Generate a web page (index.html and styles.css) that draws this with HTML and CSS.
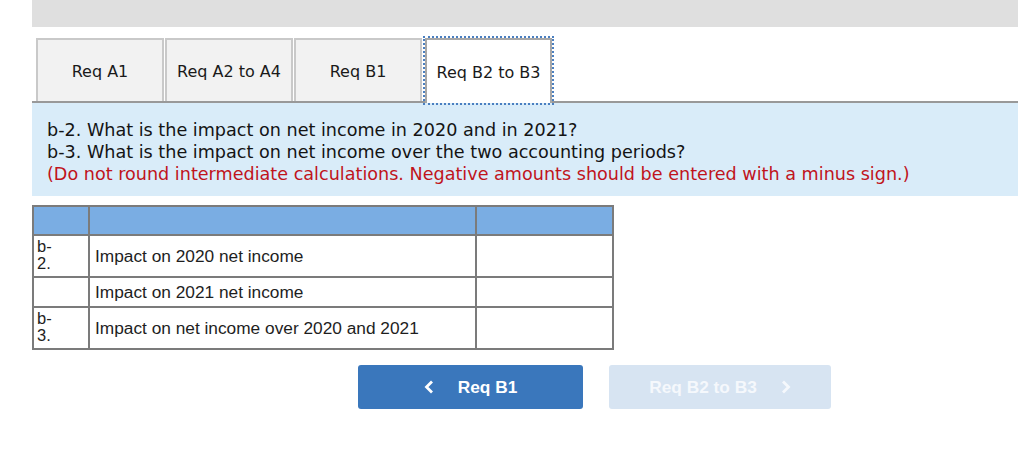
FILE: index.html
```html
<!DOCTYPE html>
<html>
<head>
<meta charset="utf-8">
<link rel="stylesheet" href="styles.css">
</head>
<body>
<div class="page">
  <div class="topbar"></div>
  <div class="tabs">
    <div class="tab">Req A1</div>
    <div class="tab">Req A2 to A4</div>
    <div class="tab">Req B1</div>
    <div class="tab active">Req B2 to B3</div>
  </div>
  <div class="panel">
    <p>b-2. What is the impact on net income in 2020 and in 2021?</p>
    <p>b-3. What is the impact on net income over the two accounting periods?</p>
    <p class="note">(Do not round intermediate calculations. Negative amounts should be entered with a minus sign.)</p>
  </div>
  <table class="grid">
    <tr class="head"><td class="c1"></td><td class="c2"></td><td class="c3"></td></tr>
    <tr class="r1"><td class="c1 lab">b-<br>2.</td><td class="c2">Impact on 2020 net income</td><td class="c3"></td></tr>
    <tr class="r2"><td class="c1"></td><td class="c2">Impact on 2021 net income</td><td class="c3"></td></tr>
    <tr class="r3"><td class="c1 lab">b-<br>3.</td><td class="c2">Impact on net income over 2020 and 2021</td><td class="c3"></td></tr>
  </table>
  <div class="nav">
    <button class="btn prev"><svg class="chev" width="10" height="14" viewBox="0 0 10 14"><polyline points="8,1.5 2.5,7 8,12.5"/></svg><span>Req B1</span></button>
    <button class="btn next"><span>Req B2 to B3</span><svg class="chev" width="10" height="14" viewBox="0 0 10 14"><polyline points="2,1.5 7.5,7 2,12.5"/></svg></button>
  </div>
</div>
</body>
</html>
```

FILE: styles.css
```css
html, body {
  margin: 0;
  padding: 0;
  background: #ffffff;
}

.page {
  margin-left: 32px;
}

.topbar {
  height: 27px;
  background: #dfdfdf;
}

.tabs {
  margin-top: 11px;
  display: flex;
  gap: 1px;
  padding-left: 4px;
  border-bottom: 2px solid #999999;
  height: 63px;
}

.tab {
  box-sizing: border-box;
  width: 128px;
  height: 63px;
  border: 2px solid #c9c9c9;
  border-bottom: none;
  background: #f2f2f2;
  display: flex;
  align-items: center;
  justify-content: center;
  font-family: "DejaVu Sans", Verdana, sans-serif;
  font-size: 16px;
  color: #1a1a1a;
  padding-top: 1px;
}

.tab.active {
  margin-left: 2px;
  width: 127px;
  height: 65px;
  background: #ffffff;
  border-color: #a8a8a8;
  outline: 2px dotted #4a7fc0;
}

.panel {
  background: #d9ecf9;
  padding: 16px 15px 11px;
  font-family: "DejaVu Sans", Verdana, sans-serif;
  font-size: 17.6px;
  line-height: 22px;
  color: #141414;
}

.panel p {
  margin: 0;
  white-space: nowrap;
}

.panel .note {
  color: #c0141c;
}

.grid {
  margin-top: 9px;
  border-collapse: collapse;
  font-family: "Liberation Sans", Arial, sans-serif;
  font-size: 17.3px;
  color: #1e1e1e;
}

.grid td {
  border: 2px solid #7b7b7b;
  padding: 0 5px;
  vertical-align: middle;
}

.grid .c1 {
  width: 48px;
  padding: 0 3px;
}

.grid .c2 {
  width: 375px;
}

.grid .c3 {
  width: 125px;
}

.grid .head td {
  background: #7aade3;
  height: 27px;
}

.grid .r1 td {
  height: 38px;
}

.grid .r2 td {
  height: 28px;
}

.grid .r3 td {
  height: 38px;
}

.grid .lab {
  font-size: 16.5px;
  line-height: 17px;
  vertical-align: top;
  padding-top: 2px;
}

.nav {
  margin-top: 15px;
  margin-left: 326px;
  display: flex;
  gap: 26px;
}

.btn {
  box-sizing: border-box;
  height: 44px;
  border: none;
  border-radius: 3px;
  display: flex;
  align-items: center;
  justify-content: center;
  gap: 24px;
  font-family: "Liberation Sans", Arial, sans-serif;
  font-weight: bold;
  font-size: 17.3px;
  color: #ffffff;
  padding: 0;
}

.btn.prev {
  width: 225px;
  background: #3a77bc;
}

.btn.next {
  width: 222px;
  background: #d7e4f2;
  color: #f5f8fc;
}

.chev polyline {
  fill: none;
  stroke: currentColor;
  stroke-width: 2.8;
}
```
